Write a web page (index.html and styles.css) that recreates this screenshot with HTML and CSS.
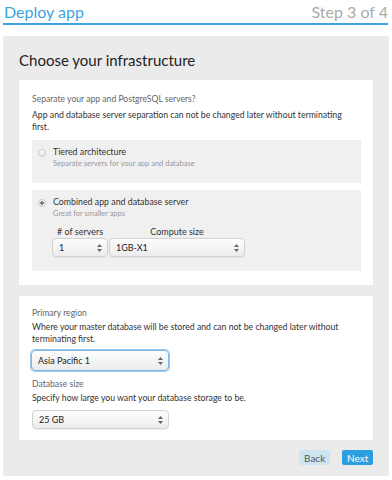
FILE: index.html
```html
<!DOCTYPE html>
<html lang="en">
<head>
    <meta charset="UTF-8">
    <title>Deploy app</title>
    <link rel="stylesheet" href="styles.css">
</head>
<body>
    <!-- Header -->
    <header class="topbar">
        <div class="app-title">Deploy app</div>
        <div class="step">Step 3 of 4</div>
    </header>

    <!-- Wizard panel -->
    <main class="panel">
        <h2 class="panel-title">Choose your infrastructure</h2>

        <div class="card">
            <div class="label">Separate your app and PostgreSQL servers?</div>
            <div class="help">App and database server separation can not be changed later without terminating first.</div>

            <div class="option">
                <span class="radio"></span>
                <div class="option-body">
                    <div class="option-title">Tiered architecture</div>
                    <div class="option-sub">Separate servers for your app and database</div>
                </div>
            </div>

            <div class="option option-big">
                <span class="radio checked"></span>
                <div class="option-body">
                    <div class="option-title">Combined app and database server</div>
                    <div class="option-sub">Great for smaller apps</div>
                    <div class="size-row">
                        <div class="field field-servers">
                            <div class="field-label">&#35; of servers</div>
                            <div class="select">
                                <span>1</span>
                                <svg class="arrows" width="5" height="8" viewBox="0 0 5 8"><path d="M2.5 0 L5 3 L0 3 Z M0 5 L5 5 L2.5 8 Z" fill="#666"/></svg>
                            </div>
                        </div>
                        <div class="field field-compute">
                            <div class="field-label center">Compute size</div>
                            <div class="select">
                                <span>1GB-X1</span>
                                <svg class="arrows" width="5" height="8" viewBox="0 0 5 8"><path d="M2.5 0 L5 3 L0 3 Z M0 5 L5 5 L2.5 8 Z" fill="#666"/></svg>
                            </div>
                        </div>
                    </div>
                </div>
            </div>
        </div>

        <div class="card card-region">
            <div class="label">Primary region</div>
            <div class="help">Where your master database will be stored and can not be changed later without terminating first.</div>
            <div class="select select-wide focused">
                <span>Asia Pacific 1</span>
                <svg class="arrows" width="5" height="8" viewBox="0 0 5 8"><path d="M2.5 0 L5 3 L0 3 Z M0 5 L5 5 L2.5 8 Z" fill="#666"/></svg>
            </div>

            <div class="label label-gap">Database size</div>
            <div class="help">Specify how large you want your database storage to be.</div>
            <div class="select select-wide">
                <span>25 GB</span>
                <svg class="arrows" width="5" height="8" viewBox="0 0 5 8"><path d="M2.5 0 L5 3 L0 3 Z M0 5 L5 5 L2.5 8 Z" fill="#666"/></svg>
            </div>
        </div>

        <div class="actions">
            <button class="btn btn-back">Back</button>
            <button class="btn btn-next">Next</button>
        </div>
    </main>
</body>
</html>
```

FILE: styles.css
```css
/* General Styles */
body {
    margin: 0;
    font-family: Lato, "Open Sans", sans-serif;
    background: #fff;
    color: #333;
    width: 392px;
}

.topbar {
    margin: 0 4px 0 3px;
    height: 23px;
    display: flex;
    justify-content: space-between;
    align-items: center;
    border-bottom: 2px solid #3ba4e0;
}

.app-title {
    font-size: 16px;
    color: #3ba4e0;
    padding-left: 1px;
}

.step {
    font-size: 16px;
    color: #aaa;
}

.panel {
    margin: 11px 3px 0 3px;
    background: #ebebeb;
    padding: 14px 16px 11px 16px;
}

.panel-title {
    margin: 0 0 9px 0;
    font-size: 15px;
    line-height: 21px;
    font-weight: 400;
    color: #222;
}

.card {
    background: #fff;
    padding: 13px 12px 14px 13px;
}

.card-region {
    margin-top: 11px;
    padding: 11px 12px 11px 13px;
}

.label {
    font-size: 8.6px;
    line-height: 12px;
    color: #666;
}

.label-gap {
    margin-top: 7px;
}

.help {
    margin-top: 4px;
    max-width: 318px;
    font-size: 8.7px;
    line-height: 12px;
    color: #333;
}

.card-region .help {
    margin-top: 2px;
}

.option {
    margin-top: 7px;
    background: #f0f0f0;
    height: 43px;
    box-sizing: border-box;
    padding: 6px 0 0 6px;
    display: flex;
    gap: 7px;
}

.option-big {
    height: 81px;
}

.radio {
    width: 6px;
    height: 6px;
    margin-top: 3px;
    border: 1px solid #c8c8c8;
    border-radius: 50%;
    background: linear-gradient(#fff, #e6e6e6);
    flex-shrink: 0;
}

.radio.checked {
    background: radial-gradient(circle, #777 0, #777 1.5px, #f4f4f4 2px);
}

.option-title {
    font-size: 8.8px;
    line-height: 12px;
    color: #333;
}

.option-sub {
    font-size: 7.5px;
    line-height: 11px;
    color: #999;
}

.size-row {
    display: flex;
    gap: 1px;
    margin-top: 7px;
    margin-left: -1px;
}

.field-label {
    font-size: 9px;
    line-height: 12px;
    color: #333;
    padding-left: 5px;
}

.field-label.center {
    text-align: center;
    padding-left: 0;
}

.field-servers .select {
    width: 56px;
}

.field-compute .select {
    width: 136px;
}

.select {
    box-sizing: border-box;
    height: 19px;
    border: 1px solid #d2d2d2;
    border-radius: 4px;
    background: linear-gradient(#fdfdfd, #ececec);
    display: flex;
    align-items: center;
    justify-content: space-between;
    padding: 0 5px 0 6px;
    font-size: 9px;
    color: #222;
    box-shadow: 0 1px 1px rgba(0, 0, 0, 0.06);
}

.select-wide {
    width: 137px;
    margin-top: 6px;
}

.select.focused {
    height: 21px;
    width: 138px;
    margin-left: -1px;
    margin-top: 5px;
    border-color: #7eb6e6;
    box-shadow: 0 0 0 1px #9cc8ee;
}

.arrows {
    display: block;
}

.actions {
    display: flex;
    justify-content: flex-end;
    gap: 12px;
    margin-top: 10px;
}

.btn {
    font-family: Lato, "Open Sans", sans-serif;
    font-size: 10px;
    height: 15px;
    border: none;
    border-radius: 2px;
    padding: 0 5px;
    cursor: pointer;
}

.btn-back {
    background: #cde5f2;
    color: #555;
    width: 31px;
}

.btn-next {
    background: #2b9ee0;
    color: #fff;
    width: 31px;
}
```
